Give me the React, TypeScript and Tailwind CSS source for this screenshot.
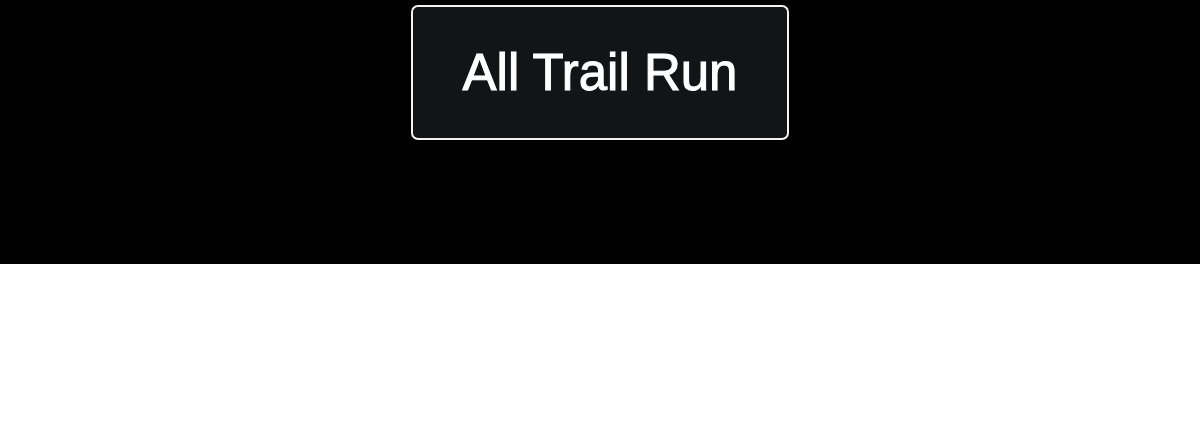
export default function App() {
  return (
    <div className="w-[1200px] h-[424px] bg-white">
      <section className="h-[264px] bg-black flex justify-center pt-[5px]">
        <button
          type="button"
          className="w-[378px] h-[135px] rounded-[7px] border-2 border-[#f2f2f2] bg-[#131416] text-white text-[51px] leading-none flex items-center justify-center [-webkit-text-stroke:1px_#ffffff]"
          style={{ fontFamily: '"Liberation Sans", Arial, sans-serif' }}
        >
          All Trail Run
        </button>
      </section>
    </div>
  );
}
